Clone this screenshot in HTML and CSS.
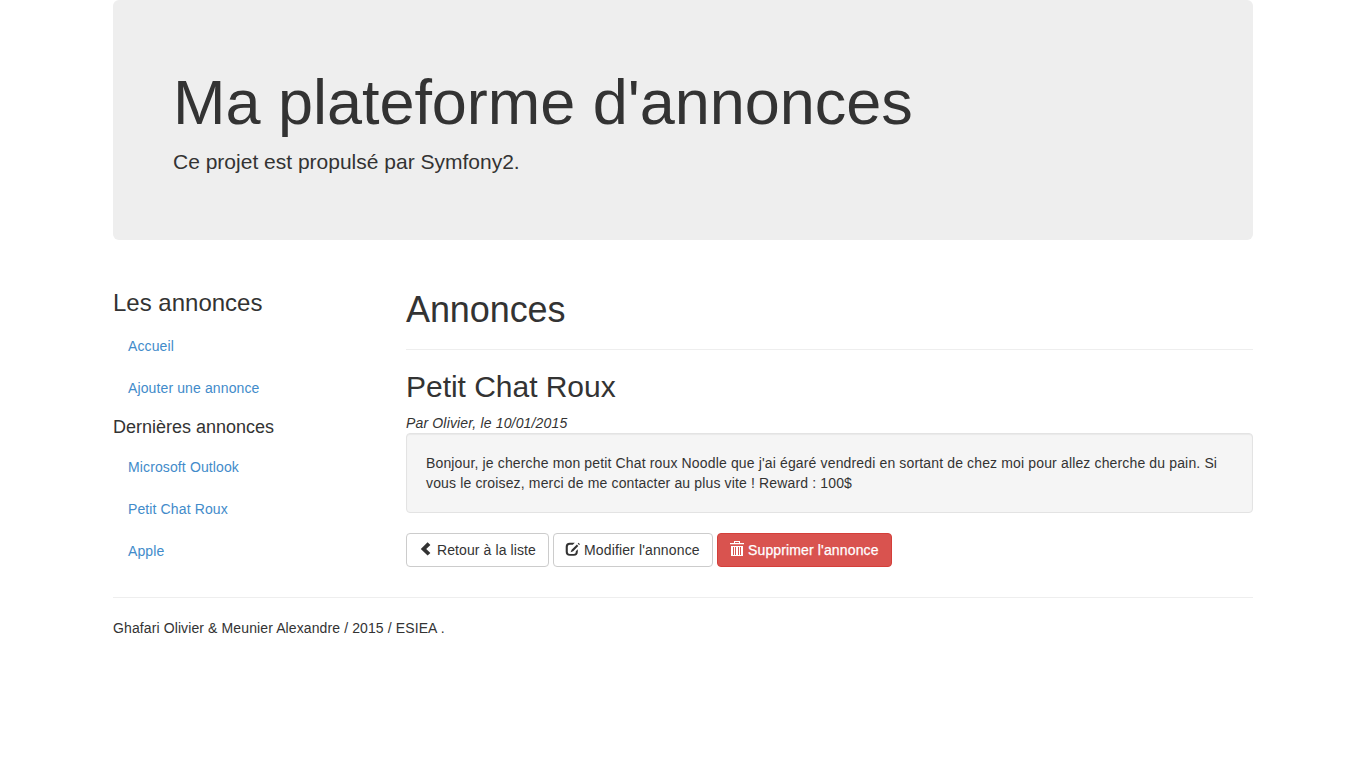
FILE: index.html
```html
<!DOCTYPE html>
<html lang="fr">
<head>
<meta charset="utf-8">
<title>Ma plateforme d'annonces</title>
<link rel="stylesheet" href="styles.css">
</head>
<body>
<div class="container">
  <header class="jumbotron">
    <h1>Ma plateforme d'annonces</h1>
    <p>Ce projet est propulsé par Symfony2.</p>
  </header>
  <div class="row">
    <nav class="menu">
      <h3>Les annonces</h3>
      <ul class="pills">
        <li><a href="#">Accueil</a></li>
        <li><a href="#">Ajouter une annonce</a></li>
      </ul>
      <h4>Dernières annonces</h4>
      <ul class="pills">
        <li><a href="#">Microsoft Outlook</a></li>
        <li><a href="#">Petit Chat Roux</a></li>
        <li><a href="#">Apple</a></li>
      </ul>
    </nav>
    <main class="content">
      <h1>Annonces</h1>
      <hr>
      <h2>Petit Chat Roux</h2>
      <i class="byline">Par Olivier, le 10/01/2015</i>
      <div class="well">Bonjour, je cherche mon petit Chat roux Noodle que j'ai égaré vendredi en sortant de chez moi pour allez cherche du pain. Si vous le croisez, merci de me contacter au plus vite ! Reward : 100$</div>
      <div class="actions">
        <a class="btn btn-back" href="#"><svg class="icon" viewBox="0 0 14 14"><path d="M8.6 .2L11.4 2.9L7.2 6.9L11.4 10.9L8.6 13.6L1.8 6.9Z"/></svg>Retour à la liste</a>
        <a class="btn btn-edit" href="#"><svg class="icon" viewBox="0 0 14 14"><path d="M8.8.8H3.8Q-.3.8-.3 4.8V9.8Q-.3 13.8 3.8 13.8H7.8Q11.8 13.8 11.8 9.8V7.3L9.8 9.2V10Q9.8 12 7.8 12H3.8Q1.8 12 1.8 10V4.8Q1.8 2.8 3.8 2.8H6.8ZM10.9 2.6L12.3 4L7.2 9.2L4.6 10.2L5.6 7.8ZM11.7 1.7L12.6.8L14 2.2L13.1 3.1Z"/></svg>Modifier l'annonce</a>
        <a class="btn btn-danger" href="#"><svg class="icon" viewBox="0 0 14 14"><path fill-rule="evenodd" d="M4 1V-.9H10V1H14V2.2H0V1ZM5 1H9V0H5ZM1 4H13V14H1ZM3 5V13H4V5ZM5 5V13H6V5ZM8 5V13H9V5ZM10 5V13H11V5Z"/></svg>Supprimer l'annonce</a>
      </div>
    </main>
  </div>
  <hr>
  <footer>Ghafari Olivier &amp; Meunier Alexandre / 2015 / ESIEA .</footer>
</div>
</body>
</html>
```
FILE: styles.css
```css
* { box-sizing: border-box; }
body { margin: 0; background: #fff; color: #333; font: 14px/20px "Liberation Sans", Arial, sans-serif; }
a { color: #428bca; text-decoration: none; }
h1, h2, h3, h4 { font-weight: 400; margin: 20px 0 10px; }
h1 { font-size: 36px; line-height: 39px; letter-spacing: -0.08px; }
h2 { font-size: 30px; line-height: 33px; letter-spacing: -0.03px; }
h3 { font-size: 24px; line-height: 26px; }
h4 { font-size: 18px; line-height: 19px; margin: 10px 0; }
hr { border: 0; border-top: 1px solid #eee; margin: 20px 0; }
.container { width: 1140px; margin: 0 auto; }
.jumbotron { height: 240px; margin-bottom: 30px; padding: 68px 60px 0; background: #eee; border-radius: 6px; }
.jumbotron h1 { margin: 0 0 10px; font-size: 63px; line-height: 69px; letter-spacing: -0.03px; }
.jumbotron p { margin: 0; font-size: 21px; line-height: 30px; }
.row { display: flex; gap: 30px; }
.menu { width: 263px; }
.content { flex: 1; }
.pills { list-style: none; margin: 0; padding: 0; display: flex; flex-direction: column; gap: 2px; letter-spacing: 0.12px; }
.pills a { display: block; padding: 10px 15px; }
.byline { display: block; letter-spacing: 0.16px; }
.well { padding: 19px; margin-bottom: 20px; background: #f5f5f5; border: 1px solid #e3e3e3; border-radius: 4px; box-shadow: inset 0 1px 1px rgba(0,0,0,.05); letter-spacing: 0.145px; }
.actions { display: flex; gap: 4px; margin-bottom: 30px; }
.btn { display: flex; gap: 4px; width: 175px; padding: 6px 12px; border: 1px solid #ccc; border-radius: 4px; color: #333; background: #fff; white-space: nowrap; letter-spacing: 0.14px; }
.btn-back { width: 143px; letter-spacing: 0.1px; }
.btn-edit { width: 160px; }
.btn-danger { color: #fff; background: #d9534f; border-color: #d43f3a; -webkit-text-stroke: 0.25px #fff; }
.icon { flex: none; width: 14px; height: 14px; margin-top: 2px; fill: currentColor; overflow: visible; }
.row + hr { margin-top: 0; }
footer { letter-spacing: 0.11px; }
```
